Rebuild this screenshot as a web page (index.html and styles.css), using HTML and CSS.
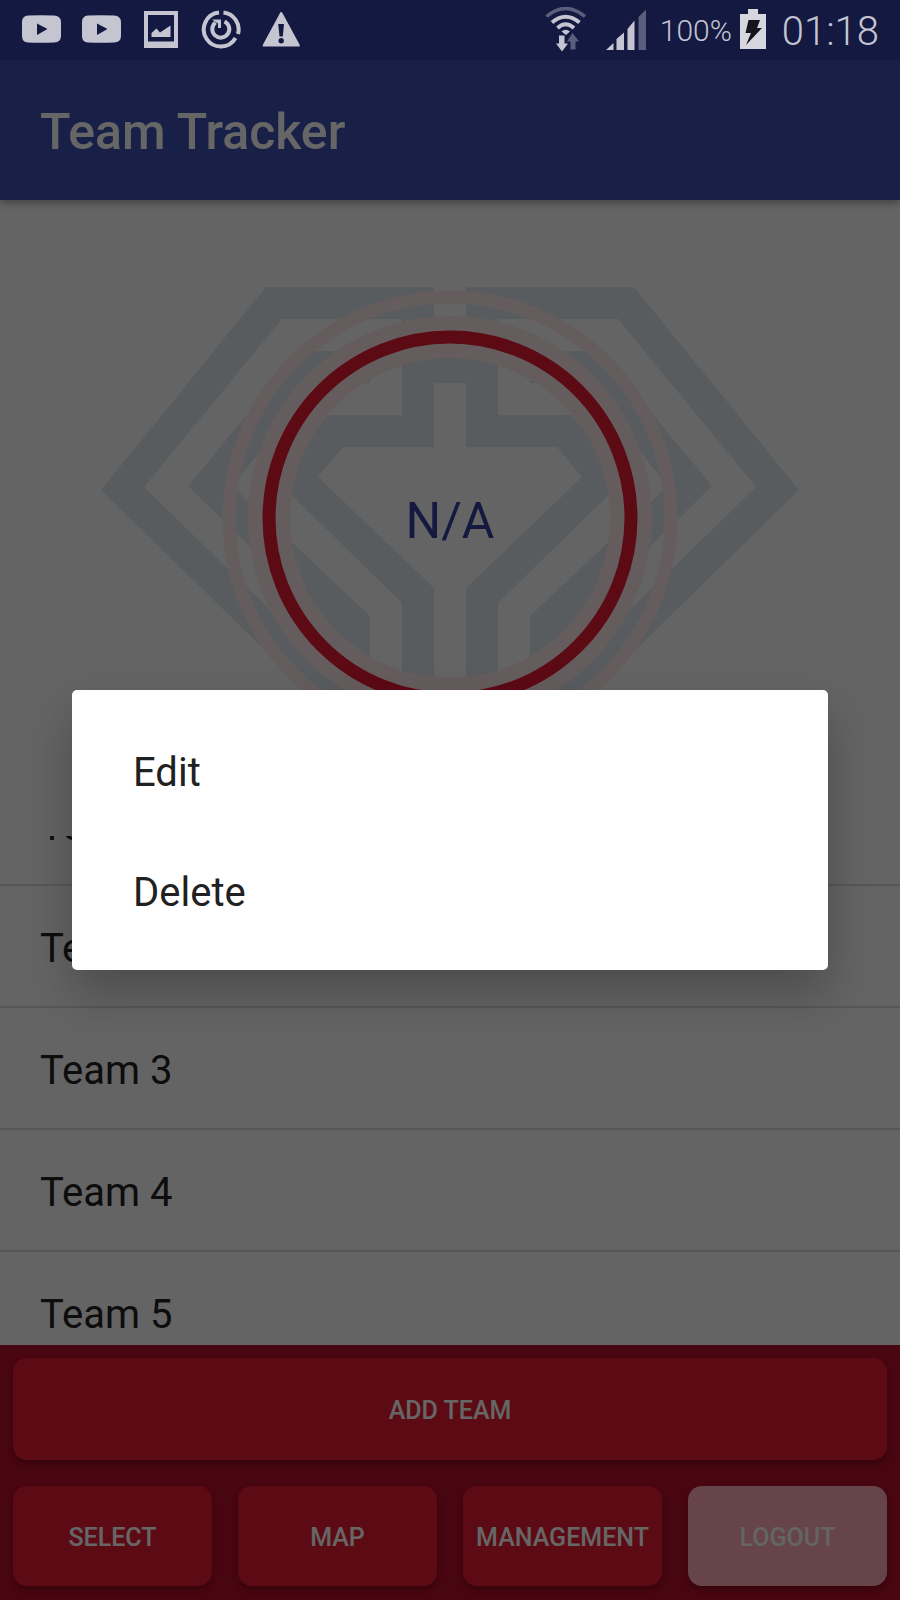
FILE: index.html
```html
<!DOCTYPE html>
<html lang="en">
<head>
<meta charset="utf-8">
<meta name="viewport" content="width=device-width, initial-scale=1">
<title>Team Tracker</title>
<link rel="stylesheet" href="styles.css">
</head>
<body>
<div class="screen">
  <div class="status">
    <div class="status-icons">
      <svg class="icon" viewBox="0 0 40 40" aria-hidden="true"><path fill="currentColor" fill-rule="evenodd" d="M7 5.500Q20 5 33 5.500Q40 6 40 12V26Q40 32 33 32.500Q20 33 7 32.500Q1 32 1 26V12Q1 6 7 5.500ZM16 13.500V25L26.500 19Z"/></svg>
      <svg class="icon" viewBox="0 0 40 40" aria-hidden="true"><path fill="currentColor" fill-rule="evenodd" d="M7 5.500Q20 5 33 5.500Q40 6 40 12V26Q40 32 33 32.500Q20 33 7 32.500Q1 32 1 26V12Q1 6 7 5.500ZM16 13.500V25L26.500 19Z"/></svg>
      <svg class="icon" viewBox="0 0 40 40" aria-hidden="true"><path fill="currentColor" fill-rule="evenodd" d="M3 1H37V38H3ZM7 5V31.500H33V5ZM10.500 27V23L15.500 18.500L19 22.500L29.500 15.500V27Z"/></svg>
      <svg class="icon" viewBox="0 0 40 40" aria-hidden="true"><g fill="none" stroke="currentColor" stroke-width="4"><path d="M18 2.600A17 17 0 1 0 34.500 28"/><path d="M22.500 2.600A17 17 0 0 1 37 24"/><path d="M23.500 11.500A8.500 8.500 0 1 1 14.500 12.500"/></g><path fill="currentColor" d="M11 9.500H20V18H17V13.500Z"/></svg>
      <svg class="icon" viewBox="0 0 40 40" aria-hidden="true"><path fill="currentColor" fill-rule="evenodd" d="M20 2Q21 2 22 4L38.500 34.500Q39.500 36.500 37.500 36.500H3Q1 36.500 2 34.500L18.500 4Q19 2 20 2ZM17.200 14L18.500 26.500H21.800L23 14ZM20.200 28A2.700 2.700 0 1 0 20.200 33.400A2.700 2.700 0 1 0 20.200 28Z"/></svg>
    </div>
    <div class="status-info">
      <svg class="icon-wide" viewBox="0 0 42 46" aria-hidden="true"><g fill="none" stroke="currentColor"><path class="faint" stroke-width="3.500" d="M1.500 9.500Q20.500-6.500 40 9.500"/><path stroke-width="3.900" d="M7 15.500Q20.500 4 34.500 15.500"/><path stroke-width="3.900" d="M12.500 21Q20.500 13.500 29 21"/></g><path fill="currentColor" d="M16.500 24.500Q20.500 21 25 24.500L21 28ZM14 28.500H19.500V36.500H23L17 44.500L11 36.500H14Z"/><path class="faint" fill="currentColor" d="M27.500 26L34 34.500H30.500V42.500H25.500V34.500H22Z"/></svg>
      <svg class="icon-signal" viewBox="0 0 40 46" aria-hidden="true"><path fill="currentColor" d="M0 43L7.500 36V43ZM10.500 43V32L18 25.500V43ZM21.500 43V22L28.500 13.500V43Z"/><path class="faint" fill="currentColor" d="M32.500 43V10L40 2.500V43Z"/></svg>
      <span class="charge">100%</span>
      <svg class="icon-battery" viewBox="0 0 26 46" aria-hidden="true"><path fill="currentColor" d="M8 2H18V7H26V42H0V7H8Z"/><path class="bolt" d="M8.500 13H20L17 21H22L6 38L11 26H5.500Z"/></svg>
      <time class="clock">01:18</time>
    </div>
  </div>

  <header class="appbar"><h1 class="title">Team Tracker</h1></header>

  <main class="content">
    <svg class="emblem" viewBox="0 0 900 636" role="img" aria-label="Status: N/A">
      <defs>
        <g id="wing">
          <path d="M101 290L266 87H434V247H343L318 277L434 388V560H402V403L275 279L328 215H402V119H282L144 287L402 538V584Z"/>
          <path d="M188 286L300 151H370V183H316L232 286L370 416V464Z"/>
        </g>
      </defs>
      <g class="logo">
        <use href="#wing"/>
        <use href="#wing" transform="matrix(-1 0 0 1 900 0)"/>
        <path d="M433 151H467V183H433Z"/>
      </g>
      <circle class="ring halo" cx="450" cy="318" r="221" stroke-width="13"/>
      <circle class="ring halo" cx="450" cy="318" r="181" stroke-width="42"/>
      <circle class="ring core" cx="450" cy="318" r="181" stroke-width="13"/>
      <text class="reading" x="450" y="338" text-anchor="middle">N/A</text>
    </svg>
    <ul class="teams">
      <li class="team">Team 1</li>
      <li class="team">Team 2</li>
      <li class="team">Team 3</li>
      <li class="team">Team 4</li>
      <li class="team">Team 5</li>
    </ul>
  </main>

  <footer class="actions">
    <button class="btn btn-add" type="button">ADD TEAM</button>
    <nav class="tabs">
      <button class="btn" type="button">SELECT</button>
      <button class="btn" type="button">MAP</button>
      <button class="btn" type="button">MANAGEMENT</button>
      <button class="btn btn-off" type="button">LOGOUT</button>
    </nav>
  </footer>

  <div class="scrim">
    <div class="dialog" role="dialog" aria-label="Team options">
      <button class="option" type="button">Edit</button>
      <button class="option" type="button">Delete</button>
    </div>
  </div>
</div>
</body>
</html>
```

FILE: styles.css
```css
* { box-sizing: border-box; }

body {
  margin: 0;
  font-family: Roboto, "Liberation Sans", sans-serif;
  background: #fafafa;
  color: #212121;
}

.screen {
  position: relative;
  display: flex;
  flex-direction: column;
  height: 100vh;
  overflow: hidden;
}

/* System bar */
.status {
  flex: none;
  position: relative;
  z-index: 3;
  display: flex;
  justify-content: space-between;
  height: 60px;
  padding: 0 21px;
  background: #131940;
  color: #c5c5d1;
}

.status-icons {
  display: flex;
  align-items: center;
  gap: 20px;
}

.status-info {
  display: flex;
  align-items: center;
}

.icon { width: 40px; height: 40px; }
.icon-wide { width: 42px; height: 46px; margin-right: 19px; }
.icon-signal { width: 40px; height: 46px; margin-right: 14px; }
.icon-battery { width: 26px; height: 46px; margin: 0 16px 0 8px; color: #d6d6de; }
.faint { opacity: 0.4; }
.bolt { fill: #14141a; }
.charge { font-size: 30px; font-weight: 300; }
.clock { padding-top: 2px; font-size: 40px; font-weight: 300; }

/* App bar */
.appbar {
  flex: none;
  position: relative;
  z-index: 1;
  display: flex;
  align-items: center;
  height: 140px;
  padding: 4px 40px 0;
  background: #3f51b5;
  color: #fff;
  box-shadow: 0 3px 8px rgba(0, 0, 0, 0.35);
}

.title {
  margin: 0;
  font-size: 50px;
  font-weight: 500;
}

/* Emblem and team list */
.content {
  flex: 1;
  min-height: 0;
  display: flex;
  flex-direction: column;
}

.emblem {
  flex: none;
  display: block;
  width: 100%;
}

.logo { fill: #dce6eb; }
.ring { fill: none; }
.halo { stroke: #fde6e8; }
.core { stroke: #e61932; }
.reading { font-size: 50px; fill: #303f9f; }

.teams {
  flex: 1;
  min-height: 0;
  margin: 0;
  padding: 0;
  list-style: none;
  overflow: hidden;
}

.team {
  display: flex;
  align-items: center;
  height: 122px;
  padding: 4px 40px 0;
  border-bottom: 2px solid #dadada;
  font-size: 40px;
}

/* The list is scrolled partway past its first row. */
.team:first-child { margin-top: -72px; }

/* Bottom actions */
.actions {
  flex: none;
  display: flex;
  flex-direction: column;
  gap: 26px;
  padding: 13px 13px 14px;
  background: #b40f28;
}

.tabs {
  display: grid;
  grid-template-columns: repeat(4, minmax(0, 1fr));
  gap: 26px;
}

.btn {
  height: 100px;
  padding: 3px 0 0;
  border: 0;
  border-radius: 14px;
  background: #e61932;
  color: #fff;
  font: 500 25px Roboto, "Liberation Sans", sans-serif;
  box-shadow: 0 4px 6px rgba(0, 0, 0, 0.25);
}

.btn-add { height: 102px; }
.btn-off { background: #ffaab6; color: #fafafa; }

/* Dialog */
.scrim {
  position: absolute;
  inset: 60px 0 0;
  z-index: 2;
  display: flex;
  align-items: center;
  padding: 0 72px;
  background: rgba(0, 0, 0, 0.6);
}

.dialog {
  flex: 1;
  display: flex;
  flex-direction: column;
  padding: 20px 0;
  border-radius: 5px;
  background: #fff;
  box-shadow: 0 24px 48px rgba(0, 0, 0, 0.24);
}

.option {
  height: 120px;
  padding: 4px 61px 0;
  border: 0;
  background: none;
  color: #212121;
  font: 400 40px Roboto, "Liberation Sans", sans-serif;
  text-align: left;
}
```
